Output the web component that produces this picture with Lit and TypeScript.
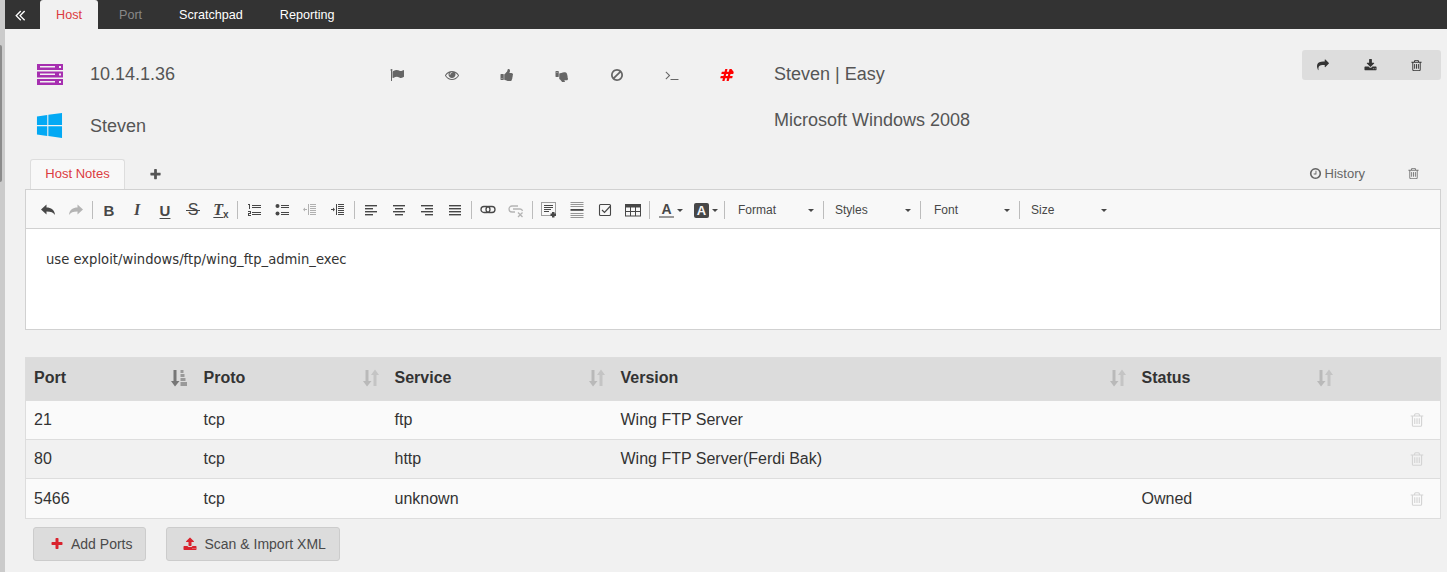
import { LitElement, html, css, svg } from 'lit';
import { customElement } from 'lit/decorators.js';

const FA: Record<string, string> = {
  dbl: 'M1011 1376q0 13-10 23l-50 50q-10 10-23 10t-23-10l-466-466q-10-10-10-23t10-23l466-466q10-10 23-10t23 10l50 50q10 10 10 23t-10 23l-393 393 393 393q10 10 10 23zm384 0q0 13-10 23l-50 50q-10 10-23 10t-23-10l-466-466q-10-10-10-23t10-23l466-466q10-10 23-10t23 10l50 50q10 10 10 23t-10 23l-393 393 393 393q10 10 10 23z',
  windows: 'M746 1006v651l-682-94v-557h682zm0-743v659h-682v-565zm981 743v786l-907-125v-661h907zm0-878v794h-907v-669z',
  flag: 'M320 256q0 72-64 110v1266q0 13-9.500 22.500t-22.500 9.500h-64q-13 0-22.500-9.500t-9.500-22.500v-1266q-64-38-64-110 0-53 37.500-90.500t90.500-37.500 90.500 37.500 37.500 90.500zm1472 64v763q0 25-12.500 38.500t-39.500 27.500q-215 116-369 116-61 0-123.500-22t-108.500-48-115.500-48-142.500-22q-192 0-464 146-17 9-33 9-26 0-45-19t-19-45v-742q0-32 31-55 21-14 79-43 236-120 421-120 107 0 200 29t219 88q38 19 88 19 54 0 117.500-21t110-47 88-47 54.500-21q26 0 45 19t19 45z',
  eye: 'M1664 960q-152-236-381-353 61 104 61 225 0 185-131.500 316.500t-316.500 131.500-316.500-131.500-131.500-316.500q0-121 61-225-229 117-381 353 133 205 333.500 326.500t434.500 121.500 434.500-121.500 333.500-326.500zm-720-384q0-20-14-34t-34-14q-125 0-214.500 89.500t-89.500 214.500q0 20 14 34t34 14 34-14 14-34q0-86 61-147t147-61q20 0 34-14t14-34zm848 384q0 34-20 69-140 230-376.500 368.500t-499.500 138.500-499.500-139-376.500-368q-20-35-20-69t20-69q140-229 376.500-368t499.500-139 499.500 139 376.500 368q20 35 20 69z',
  up: 'M320 1344q0-26-19-45t-45-19q-27 0-45.500 19t-18.500 45q0 27 18.500 45.500t45.500 18.500q26 0 45-18.500t19-45.500zm160-512v640q0 26-19 45t-45 19h-288q-26 0-45-19t-19-45v-640q0-26 19-45t45-19h288q26 0 45 19t19 45zm1184 0q0 86-55 149 15 44 15 76 3 76-43 137 17 56 0 117-15 57-54 94 9 112-49 181-64 76-197 78h-129q-66 0-144-15.500t-121.500-29-120.500-39.500q-123-43-158-44-26-1-45-19.500t-19-44.500v-641q0-25 18-43.500t43-20.500q24-2 76-59t101-121q68-87 101-120 18-18 31-48t17.500-48.500 13.500-60.500q7-39 12.500-61t19.500-52 34-50q19-19 45-19 46 0 82.500 10.500t60 26 40 40.500 24 45 12 50 5 45 .5 39q0 38-9.500 76t-19 60-27.500 56q-3 6-10 18t-11 22-8 24h277q78 0 135 57t57 135z',
  down: 'M320 576q0 26-19 45t-45 19q-27 0-45.500-19t-18.500-45q0-27 18.500-45.500t45.500-18.500q26 0 45 18.500t19 45.500zm160 512v-640q0-26-19-45t-45-19h-288q-26 0-45 19t-19 45v640q0 26 19 45t45 19h288q26 0 45-19t19-45zm1129 149q55 61 55 149-1 78-57.500 135t-134.500 57h-277q4 14 8 24t11 22 10 18q18 37 27 57t19 58.500 10 76.500q0 24-.5 39t-5 45-12 50-24 45-40 40.500-60 26-82.500 10.500q-26 0-45-19-20-20-34-50t-19.500-52-12.500-61q-9-42-13.500-60.500t-17.500-48.500-31-48q-33-33-101-120-49-64-101-121t-76-59q-25-2-43-20.500t-18-43.500v-641q0-26 19-44.500t45-19.500q35-1 158-44 77-26 120.500-39.500t121.500-29 144-15.500h129q133 2 197 78 58 69 49 181 39 37 54 94 17 61 0 117 46 61 43 137 0 32-15 76z',
  ban: 'M1440 893q0-161-87-295l-754 753q137 89 297 89 111 0 211.500-43.500t173.500-116.500 116-174.500 43-212.500zm-999 299l755-754q-135-91-300-91-148 0-273 73t-198 199-73 274q0 162 89 299zm1223-299q0 157-61 300t-163.500 246-245 164-298.500 61-298.500-61-245-164-163.500-246-61-300 61-299.500 163.500-245.500 245-164 298.500-61 298.500 61 245 164 163.500 245.500 61 299.500z',
  terminal: 'M649 983l-466 466q-10 10-23 10t-23-10l-50-50q-10-10-10-23t10-23l393-393-393-393q-10-10-10-23t10-23l50-50q10-10 23-10t23 10l466 466q10 10 10 23t-10 23zm1079 457v64q0 14-9 23t-23 9h-960q-14 0-23-9t-9-23v-64q0-14 9-23t23-9h960q14 0 23 9t9 23z',
  hash: 'M991 1024l64-256h-254l-64 256h254zm768-504l-56 224q-7 24-31 24h-327l-64 256h311q15 0 25 12 10 14 6 28l-56 224q-5 24-31 24h-327l-81 328q-7 24-31 24h-224q-16 0-26-12-9-12-6-28l78-312h-254l-81 328q-7 24-31 24h-225q-15 0-25-12-9-12-6-28l78-312h-311q-15 0-25-12-9-12-6-28l56-224q7-24 31-24h327l64-256h-311q-15 0-25-12-10-14-6-28l56-224q5-24 31-24h327l81-328q7-24 32-24h224q15 0 25 12 9 12 6 28l-78 312h254l81-328q7-24 32-24h224q15 0 25 12 9 14 6 28z',
  share: 'M1792 640q0 26-19 45l-512 512q-19 19-45 19t-45-19-19-45v-256h-224q-98 0-175.500 6t-154 21.500-133 42.500-105.500 69.500-80 101-48.500 138.500-17.500 181q0 55 5 123 0 6 2.500 23.500t2.500 26.500q0 15-8.500 25t-23.500 10q-16 0-28-17-7-9-13-22t-13.500-30-10.500-24q-127-285-127-451 0-199 53-333 162-403 875-403h224v-256q0-26 19-45t45-19 45 19l512 512q19 19 19 45z',
  download: 'M1344 1344q0-26-19-45t-45-19-45 19-19 45 19 45 45 19 45-19 19-45zm256 0q0-26-19-45t-45-19-45 19-19 45 19 45 45 19 45-19 19-45zm128-224v320q0 40-28 68t-68 28h-1472q-40 0-68-28t-28-68v-320q0-40 28-68t68-28h465l135 136q58 56 136 56t136-56l136-136h464q40 0 68 28t28 68zm-325-569q17 41-14 70l-448 448q-18 19-45 19t-45-19l-448-448q-31-29-14-70 17-39 59-39h256v-448q0-26 19-45t45-19h256q26 0 45 19t19 45v448h256q42 0 59 39z',
  upload: 'M1344 1472q0-26-19-45t-45-19-45 19-19 45 19 45 45 19 45-19 19-45zm256 0q0-26-19-45t-45-19-45 19-19 45 19 45 45 19 45-19 19-45zm128-224v320q0 40-28 68t-68 28h-1472q-40 0-68-28t-28-68v-320q0-40 28-68t68-28h427q21 56 70.500 92t110.500 36h256q61 0 110.500-36t70.500-92h427q40 0 68 28t28 68zm-325-648q-17 40-59 40h-256v448q0 26-19 45t-45 19h-256q-26 0-45-19t-19-45v-448h-256q-42 0-59-40-17-39 14-69l448-448q18-19 45-19t45 19l448 448q31 30 14 69z',
  trash: 'M704 736v576q0 14-9 23t-23 9h-64q-14 0-23-9t-9-23v-576q0-14 9-23t23-9h64q14 0 23 9t9 23zm256 0v576q0 14-9 23t-23 9h-64q-14 0-23-9t-9-23v-576q0-14 9-23t23-9h64q14 0 23 9t9 23zm256 0v576q0 14-9 23t-23 9h-64q-14 0-23-9t-9-23v-576q0-14 9-23t23-9h64q14 0 23 9t9 23zm128 724v-948h-896v948q0 22 7 40.500t14.500 27 10.500 8.500h832q3 0 10.500-8.500t14.500-27 7-40.500zm-672-1076h448l-48-117q-7-9-17-11h-317q-10 2-17 11zm928 32v64q0 14-9 23t-23 9h-96v948q0 83-47 143.500t-113 60.500h-832q-66 0-113-58.500t-47-141.500v-952h-96q-14 0-23-9t-9-23v-64q0-14 9-23t23-9h309l70-167q15-37 54-63t79-26h320q40 0 79 26t54 63l70 167h309q14 0 23 9t9 23z',
  clock: 'M1024 544v448q0 14-9 23t-23 9h-320q-14 0-23-9t-9-23v-64q0-14 9-23t23-9h224v-352q0-14 9-23t23-9h64q14 0 23 9t9 23zm416 352q0-148-73-273t-198-198-273-73-273 73-198 198-73 273 73 273 198 198 273 73 273-73 198-198 73-273zm224 0q0 209-103 385.500t-279.500 279.500-385.500 103-385.500-103-279.500-279.500-103-385.500 103-385.500 279.500-279.500 385.500-103 385.500 103 279.500 279.500 103 385.500z',
  plus: 'M1600 736v192q0 40-28 68t-68 28h-416v416q0 40-28 68t-68 28h-192q-40 0-68-28t-28-68v-416h-416q-40 0-68-28t-28-68v-192q0-40 28-68t68-28h416v-416q0-40 28-68t68-28h192q40 0 68 28t28 68v416h416q40 0 68 28t28 68z',
};

const fa = (name: string, size = 14, color = '#666') => html`<svg
  class="fa"
  width=${size}
  height=${size}
  viewBox="0 0 1792 1792"
  fill=${color}
>
  <path d=${FA[name]}></path>
</svg>`;

// editor toolbar icons, all on a 16 box
const lines = (rows: number[][], w = 1) =>
  rows.map(([x, y, len]) => svg`<rect x=${x} y=${y} width=${len} height=${w}></rect>`);

const TB: Record<string, unknown> = {
  undo: svg`<path d="M1 7.500 6.500 2.500V5.500C11 5.500 14.500 7.500 15 13 13.500 10.500 11 9.500 6.500 9.500V12.500Z"></path>`,
  redo: svg`<path d="M15 7.500 9.500 2.500V5.500C5 5.500 1.500 7.500 1 13 2.500 10.500 5 9.500 9.500 9.500V12.500Z"></path>`,
  ol: svg`${lines([[6, 3, 9], [6, 5, 9], [6, 10, 9], [6, 12, 9]])}<rect x="2" y="2" width="2" height="1"></rect><rect x="3" y="2" width="1" height="5"></rect><rect x="2" y="9" width="3" height="1"></rect><rect x="4" y="10" width="1" height="1"></rect><rect x="2" y="11" width="3" height="1"></rect><rect x="2" y="12" width="1" height="1"></rect><rect x="2" y="13" width="3" height="1"></rect>`,
  ul: svg`<circle cx="3.500" cy="4" r="2"></circle><circle cx="3.500" cy="11.500" r="2"></circle>${lines([[7, 3, 8], [7, 5, 8], [7, 10, 8], [7, 12, 8]])}`,
  outdent: svg`<g opacity=".4">${lines([[8, 2, 6], [8, 4, 6], [8, 6, 6], [8, 8, 6], [8, 10, 6], [8, 12, 6]])}<rect x="6" y="2" width="1" height="11"></rect><rect x="2" y="7" width="3" height="1"></rect><path d="M1 7.500 3 5.500v4Z"></path></g>`,
  indent: svg`${lines([[8, 2, 6], [8, 4, 6], [8, 6, 6], [8, 8, 6], [8, 10, 6], [8, 12, 6]])}<rect x="6" y="2" width="1" height="11"></rect><rect x="1" y="7" width="2" height="1"></rect><path d="M5 7.500 3 5.500v4Z"></path>`,
  left: svg`${lines([[2, 3, 12], [2, 6, 8], [2, 9, 12], [2, 12, 8]], 1.4)}`,
  center: svg`${lines([[2, 3, 12], [4, 6, 8], [2, 9, 12], [4, 12, 8]], 1.4)}`,
  right: svg`${lines([[2, 3, 12], [6, 6, 8], [2, 9, 12], [6, 12, 8]], 1.4)}`,
  justify: svg`${lines([[2, 3, 12], [2, 6, 12], [2, 9, 12], [2, 12, 12]], 1.4)}`,
  link: svg`<g fill="none" stroke="currentColor" stroke-width="1.300"><rect x="1" y="4.500" width="9" height="6" rx="3"></rect><rect x="6" y="4.500" width="9" height="6" rx="3"></rect></g>`,
  unlink: svg`<g fill="none" stroke="#b4b4b4" stroke-width="1.300"><path d="M10 4H4A3 3 0 0 0 4 10H7"></path><path d="M5 7H12A2.500 2.500 0 0 1 14.500 9"></path><path d="M10 10.500 14.500 15M14.500 10.500 10 15"></path></g>`,
  blocks: svg`<rect x="0.500" y="0.500" width="14" height="13" fill="none" stroke="currentColor" stroke-dasharray="1 1"></rect>${lines([[3, 3, 9], [3, 5, 9], [3, 7, 7], [3, 9, 5]])}<path d="M9.500 11.500H11V10h2.500v1.500H15V14h-1.500v1.500H11V14H9.500Z"></path>`,
  hr: svg`<g opacity=".55">${lines([[1.500, 0, 13], [1.500, 2, 13], [1.500, 4, 13], [1.500, 11, 13], [1.500, 13, 13], [1.500, 15, 13]])}</g><rect x="1.500" y="7" width="13" height="1.800"></rect>`,
  check: svg`<rect x="2.500" y="2.500" width="11" height="11" rx="1" fill="none" stroke="currentColor" stroke-width="1.100"></rect><path d="M5 8 7.500 10.500 13.500 4" fill="none" stroke="currentColor" stroke-width="1.200"></path>`,
  table: svg`<rect x="0.500" y="2.500" width="15" height="11.500" fill="none" stroke="currentColor"></rect><rect x="0.500" y="2.500" width="15" height="3"></rect><path d="M5.500 5v9M10.500 5v9M1 9.500h14" stroke="currentColor" fill="none"></path>`,
};

const tb = (name: string, disabled = false) => html`<span class="tb ${disabled ? 'off' : ''}"
  ><svg width="16" height="16" viewBox="0 0 16 16" fill="currentColor">${TB[name]}</svg></span
>`;

// the sort arrows in the table header
const sortIcon = (active = false) => html`<svg
  class="sort"
  width="16"
  height="18"
  viewBox="0 0 16 18"
>
  <path d="M2.500 1h3v11h3L4 17.500 0 12h2.500Z" fill=${active ? '#777' : '#b9b9b9'}></path>
  ${active
    ? svg`<g fill="#999"><rect x="9.500" y="1" width="3" height="3"></rect><rect x="9.500" y="5" width="4" height="3"></rect><rect x="9.500" y="9" width="5" height="3"></rect><rect x="9.500" y="13" width="6.500" height="4"></rect></g>`
    : svg`<path d="M10.500 17h3V6H16L12 .500 8 6h2.500Z" fill="#c4c4c4"></path>`}
</svg>`;

const COLS = ['Port', 'Proto', 'Service', 'Version', 'Status'];
const ROWS = [
  ['21', 'tcp', 'ftp', 'Wing FTP Server', ''],
  ['80', 'tcp', 'http', 'Wing FTP Server(Ferdi Bak)', ''],
  ['5466', 'tcp', 'unknown', '', 'Owned'],
];

@customElement('app-root')
export class AppRoot extends LitElement {
  static styles = css`
    :host {
      display: flex;
      height: 572px;
      overflow: hidden;
      background: #f1f1f1;
      color: #333;
      font-family: 'Liberation Sans', Arial, sans-serif;
    }
    * {
      box-sizing: border-box;
    }
    svg {
      display: block;
      flex: none;
    }
    .strip {
      position: relative;
      width: 5px;
      flex: none;
      background: #cbcbcb;
    }
    .thumb {
      position: absolute;
      top: 45px;
      left: 0;
      width: 2px;
      height: 137px;
      background: #8b8b8b;
      border-radius: 0 2px 2px 0;
    }
    .main {
      flex: 1;
      min-width: 0;
    }

    .topbar {
      display: flex;
      height: 29px;
      background: #333;
      font-size: 12.600px;
      color: #fff;
    }
    .toggle {
      display: flex;
      align-items: center;
      width: 35px;
      padding-left: 6px;
    }
    .topbar .tab {
      display: flex;
      align-items: center;
      justify-content: center;
      padding-right: 37px;
    }
    .topbar .tab.active {
      width: 58px;
      margin-right: 21px;
      padding: 0;
      background: #f1f1f1;
      color: #dc3a3e;
      border-radius: 3px 3px 0 0;
    }
    .topbar .tab.muted {
      color: #888;
    }

    .head {
      display: flex;
      height: 130px;
      padding: 20px 6px 0 32px;
    }
    .ident {
      width: 332px;
      flex: none;
      font-size: 18px;
      color: #555;
    }
    .ident-row {
      display: flex;
      align-items: center;
      height: 50px;
    }
    .ident-row + .ident-row {
      margin-top: 2px;
    }
    .ident-icon {
      width: 53px;
      flex: none;
    }
    .ident-icon .fa {
      margin: -3px 0 0 -1px;
    }
    .flags {
      display: flex;
      width: 386px;
      flex: none;
      height: 50px;
      align-items: center;
      padding-top: 2px;
    }
    .flags span {
      display: flex;
      justify-content: center;
      width: 55.200px;
    }
    .info {
      flex: 1;
      margin-left: 19px;
      font-size: 18px;
      color: #555;
    }
    .info div {
      height: 46px;
      padding-top: 14px;
      line-height: 22px;
    }
    .actions {
      display: grid;
      grid-template-columns: 42px 52px 40px;
      align-self: flex-start;
      height: 30px;
      width: 139px;
      margin-top: 1px;
      background: #ddd;
      border-radius: 3px;
    }
    .actions span {
      display: flex;
      align-items: center;
      justify-content: center;
    }

    .note-tabs {
      display: flex;
      align-items: center;
      height: 30px;
      padding: 0 6px 0 25px;
      font-size: 13px;
    }
    .note-tab {
      display: flex;
      align-items: center;
      justify-content: center;
      width: 95px;
      height: 30px;
      margin-right: 24px;
      padding-bottom: 2px;
      background: #f8f8f8;
      border: 1px solid #ddd;
      border-bottom: none;
      border-radius: 3px 3px 0 0;
      color: #dc3a3e;
    }
    .history {
      display: flex;
      align-items: center;
      gap: 3px;
      margin: 0 0 2px auto;
      color: #666;
    }
    .note-trash {
      margin: 0 21px 2px 42px;
    }

    .editor {
      margin: 0 6px 0 20px;
      border: 1px solid #d1d1d1;
    }
    .toolbar {
      display: flex;
      align-items: center;
      height: 39px;
      padding: 2px 0 0 8px;
      background: #f8f8f8;
      border-bottom: 1px solid #d1d1d1;
      color: #474747;
    }
    .tb {
      display: flex;
      align-items: center;
      justify-content: center;
      width: 28px;
      height: 20px;
      flex: none;
      font-size: 15px;
      font-weight: bold;
    }
    .tb.off {
      color: #b4b4b4;
    }
    .tb .i {
      font-size: 16px;
      font-style: italic;
      font-family: 'Liberation Serif', serif;
    }
    .tb .u {
      text-decoration: underline;
      text-underline-offset: 2px;
    }
    .tb .s {
      position: relative;
      font-size: 16px;
      font-weight: normal;
    }
    .tb .s::after {
      content: '';
      position: absolute;
      left: -2px;
      right: -2px;
      top: 9px;
      height: 1px;
      background: currentColor;
    }
    .tb .x {
      font-size: 10px;
      font-style: normal;
      align-self: flex-end;
    }
    .sep {
      width: 1px;
      height: 18px;
      margin: 0 2px;
      background: #bcbcbc;
      flex: none;
    }
    .color {
      display: flex;
      align-items: center;
      width: 35px;
      height: 20px;
      padding-left: 7px;
      gap: 3px;
      flex: none;
    }
    .color .a {
      width: 15px;
      text-align: center;
      font-size: 14px;
      font-weight: bold;
      line-height: 14px;
      border-bottom: 2px solid #999;
    }
    .color .a.box {
      background: #474747;
      color: #f8f8f8;
      border: none;
      border-radius: 2px;
      font-size: 13px;
      line-height: 15px;
    }
    .caret {
      width: 0;
      height: 0;
      border: 3px solid transparent;
      border-top-color: #474747;
      border-bottom: none;
      flex: none;
    }
    .combo {
      display: flex;
      align-items: center;
      justify-content: space-between;
      height: 20px;
      padding: 0 7px 0 9px;
      font-size: 12px;
      color: #474747;
      flex: none;
    }
    .combo.narrow {
      width: 92px;
    }
    .combo.wide {
      width: 94px;
      padding-left: 11px;
    }
    .body {
      height: 100px;
      padding: 22px 20px;
      background: #fff;
      font-family: 'DejaVu Sans', sans-serif;
      font-size: 13.170px;
      line-height: 17px;
      color: #333;
    }

    table {
      width: 1416px;
      margin: 27px 0 0 20px;
      border: 1px solid #ddd;
      border-collapse: collapse;
      table-layout: fixed;
      font-size: 16px;
      line-height: 22px;
    }
    th {
      height: 43px;
      padding: 0 8px 3px;
      background: #dcdcdc;
      text-align: left;
      font-weight: bold;
    }
    th:first-child {
      padding-right: 9px;
    }
    .th {
      display: flex;
      align-items: center;
      justify-content: space-between;
    }
    td {
      height: 39px;
      padding: 8px;
      border-top: 1px solid #ddd;
      background: #fafafa;
    }
    tr:nth-child(even) td {
      background: #f1f1f1;
    }
    tr:last-child td {
      height: 40px;
    }
    td.del {
      padding: 0 0 0 68px;
    }

    .buttons {
      display: flex;
      gap: 20px;
      padding: 8px 0 0 28px;
    }
    .btn {
      display: flex;
      align-items: center;
      height: 34px;
      gap: 7px;
      padding: 0 13px 0 16px;
      background: #dcdcdc;
      border: 1px solid #ccc;
      border-radius: 3px;
      font-size: 14px;
      color: #4a4a4a;
    }
  `;

  private sep() {
    return html`<span class="sep"></span>`;
  }

  render() {
    return html`
      <div class="strip"><div class="thumb"></div></div>
      <div class="main">
        <nav class="topbar">
          <span class="toggle">${fa('dbl', 18, '#fff')}</span>
          <span class="tab active">Host</span>
          <span class="tab muted">Port</span>
          <span class="tab">Scratchpad</span>
          <span class="tab">Reporting</span>
        </nav>

        <section class="head">
          <div class="ident">
            <div class="ident-row">
              <span class="ident-icon">
                <svg width="26" height="21" viewBox="0 0 26 21" fill="#a62fb0">
                  <rect width="26" height="6"></rect>
                  <rect y="7.500" width="26" height="6"></rect>
                  <rect y="15" width="26" height="6"></rect>
                  <g fill="#f1f1f1">
                    <rect x="3" y="2" width="15" height="1.500"></rect>
                    <rect x="3" y="9.500" width="15" height="1.500"></rect>
                    <rect x="3" y="17" width="15" height="1.500"></rect>
                    <rect x="22" y="2" width="2" height="2"></rect>
                    <rect x="22" y="9.500" width="2" height="2"></rect>
                    <rect x="22" y="17" width="2" height="2"></rect>
                  </g>
                </svg>
              </span>
              <span>10.14.1.36</span>
            </div>
            <div class="ident-row">
              <span class="ident-icon">${fa('windows', 27, '#03a9f4')}</span>
              <span>Steven</span>
            </div>
          </div>
          <div class="flags">
            <span>${fa('flag')}</span>
            <span>${fa('eye')}</span>
            <span>${fa('up')}</span>
            <span>${fa('down')}</span>
            <span>${fa('ban')}</span>
            <span>${fa('terminal')}</span>
            <span>${fa('hash', 14, '#f00')}</span>
          </div>
          <div class="info">
            <div>Steven | Easy</div>
            <div>Microsoft Windows 2008</div>
          </div>
          <div class="actions">
            <span>${fa('share', 12, '#333')}</span>
            <span>${fa('download', 13, '#333')}</span>
            <span>${fa('trash', 13, '#333')}</span>
          </div>
        </section>

        <div class="note-tabs">
          <span class="note-tab">Host Notes</span>
          ${fa('plus', 13, '#555')}
          <span class="history">${fa('clock', 13, '#666')} History</span>
          <span class="note-trash">${fa('trash', 13, '#777')}</span>
        </div>

        <div class="editor">
          <div class="toolbar">
            ${tb('undo')}${tb('redo', true)}${this.sep()}
            <span class="tb">B</span>
            <span class="tb"><span class="i">I</span></span>
            <span class="tb"><span class="u">U</span></span>
            <span class="tb"><span class="s">S</span></span>
            <span class="tb"><span class="i u">T</span><span class="x">x</span></span>
            ${this.sep()}${tb('ol')}${tb('ul')}${tb('outdent')}${tb('indent')}${this.sep()}
            ${tb('left')}${tb('center')}${tb('right')}${tb('justify')}${this.sep()}
            ${tb('link')}${tb('unlink', true)}${this.sep()}
            ${tb('blocks')}${tb('hr')}${tb('check')}${tb('table')}${this.sep()}
            <span class="color"><span class="a">A</span><span class="caret"></span></span>
            <span class="color"><span class="a box">A</span><span class="caret"></span></span>
            ${this.sep()}
            <span class="combo wide">Format<span class="caret"></span></span>${this.sep()}
            <span class="combo narrow">Styles<span class="caret"></span></span>${this.sep()}
            <span class="combo wide">Font<span class="caret"></span></span>${this.sep()}
            <span class="combo narrow">Size<span class="caret"></span></span>
          </div>
          <div class="body">use exploit/windows/ftp/wing_ftp_admin_exec</div>
        </div>

        <table>
          <colgroup>
            <col style="width:170px" />
            <col style="width:191px" />
            <col style="width:226px" />
            <col style="width:521px" />
            <col style="width:207px" />
            <col />
          </colgroup>
          <thead>
            <tr>
              ${COLS.map(
                (c, i) => html`<th><div class="th">${c}${sortIcon(i === 0)}</div></th>`
              )}
              <th></th>
            </tr>
          </thead>
          <tbody>
            ${ROWS.map(
              row => html`<tr>
                ${row.map(v => html`<td>${v}</td>`)}
                <td class="del">${fa('trash', 16, '#d4d4d4')}</td>
              </tr>`
            )}
          </tbody>
        </table>

        <div class="buttons">
          <span class="btn">${fa('plus', 14, '#d9232e')} Add Ports</span>
          <span class="btn">${fa('upload', 14, '#d9232e')} Scan &amp; Import XML</span>
        </div>
      </div>
    `;
  }
}
